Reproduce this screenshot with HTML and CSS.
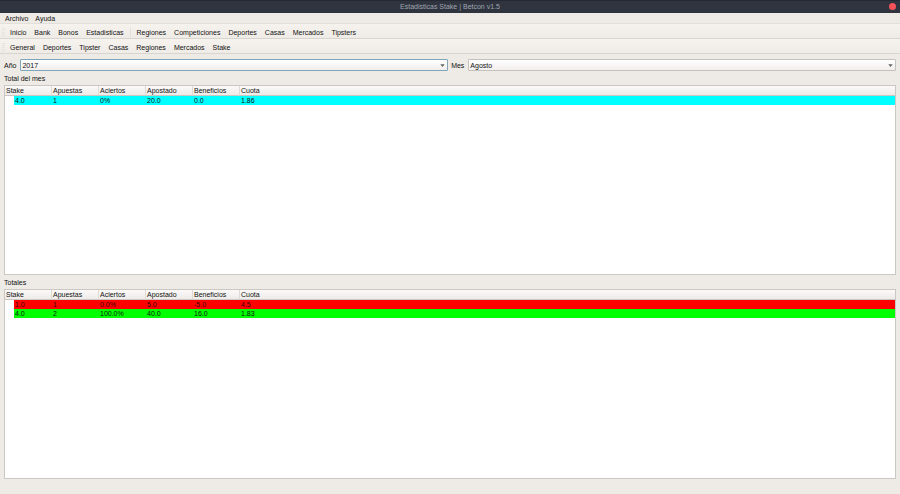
FILE: index.html
```html
<!DOCTYPE html>
<html lang="es">
<head>
<meta charset="utf-8">
<title>Estadisticas Stake | Betcon v1.5</title>
<link rel="stylesheet" href="styles.css">
</head>
<body>
<header class="titlebar">
  <h1 class="title">Estadisticas Stake | Betcon v1.5</h1>
  <button class="close" type="button" aria-label="Cerrar"></button>
</header>
<nav class="menubar">
  <button type="button">Archivo</button>
  <button type="button">Ayuda</button>
</nav>
<nav class="toolbar">
  <span class="grip"></span>
  <button type="button">Inicio</button>
  <button type="button">Bank</button>
  <button type="button">Bonos</button>
  <button type="button">Estadisticas</button>
  <span class="separator"></span>
  <button type="button">Regiones</button>
  <button type="button">Competiciones</button>
  <button type="button">Deportes</button>
  <button type="button">Casas</button>
  <button type="button">Mercados</button>
  <button type="button">Tipsters</button>
</nav>
<nav class="toolbar">
  <span class="grip"></span>
  <button type="button">General</button>
  <button type="button">Deportes</button>
  <button type="button">Tipster</button>
  <button type="button">Casas</button>
  <button type="button">Regiones</button>
  <button type="button">Mercados</button>
  <button type="button">Stake</button>
</nav>
<main class="content">
  <form class="filters">
    <label for="year">Año</label>
    <div class="combo">
      <select id="year" class="active"><option>2017</option></select>
      <svg class="arrow" viewBox="0 0 5 3" aria-hidden="true"><path d="M0.3 0.3H4.7L2.5 2.9Z"/></svg>
    </div>
    <label for="month">Mes</label>
    <div class="combo">
      <select id="month"><option>Agosto</option></select>
      <svg class="arrow" viewBox="0 0 5 3" aria-hidden="true"><path d="M0.3 0.3H4.7L2.5 2.9Z"/></svg>
    </div>
  </form>
  <h2 class="caption" id="month-total">Total del mes</h2>
  <div class="view">
    <table aria-labelledby="month-total">
      <thead>
        <tr><th>Stake</th><th>Apuestas</th><th>Aciertos</th><th>Apostado</th><th>Beneficios</th><th>Cuota</th></tr>
      </thead>
      <tbody>
        <tr class="neutral"><td>4.0</td><td>1</td><td>0%</td><td>20.0</td><td>0.0</td><td>1.86</td></tr>
      </tbody>
    </table>
  </div>
  <h2 class="caption" id="totals">Totales</h2>
  <div class="view">
    <table aria-labelledby="totals">
      <thead>
        <tr><th>Stake</th><th>Apuestas</th><th>Aciertos</th><th>Apostado</th><th>Beneficios</th><th>Cuota</th></tr>
      </thead>
      <tbody>
        <tr class="loss"><td>1.0</td><td>1</td><td>0.0%</td><td>5.0</td><td>-5.0</td><td>4.5</td></tr>
        <tr class="win"><td>4.0</td><td>2</td><td>100.0%</td><td>40.0</td><td>16.0</td><td>1.83</td></tr>
      </tbody>
    </table>
  </div>
</main>
</body>
</html>
```
FILE: styles.css
```css
* {
  box-sizing: border-box;
}

body {
  display: flex;
  flex-direction: column;
  min-height: 100vh;
  margin: 0;
  background: #eeeae6;
  color: #111111;
  font: 7px/9px "Liberation Sans", Arial, sans-serif;
}

button,
select {
  margin: 0;
  border: 0;
  background: none;
  color: inherit;
  font: inherit;
}

.titlebar {
  display: grid;
  grid-template-columns: 1fr auto 1fr;
  align-items: center;
  height: 13px;
  padding: 0 4px 1px;
  border-top: 1px solid #232833;
  background: #2f343f;
}

.title {
  grid-column: 2;
  margin: 0;
  color: #a0a6b1;
  font: inherit;
}

.close {
  justify-self: end;
  width: 7px;
  height: 7px;
  padding: 0;
  border-radius: 50%;
  background: #f7525a;
}

.menubar {
  display: flex;
  align-items: center;
  height: 11px;
  padding: 0 1px;
  border-bottom: 1px solid #e2deda;
}

.menubar button {
  padding: 0 3px 0 4px;
}

.toolbar {
  display: flex;
  align-items: center;
  height: 15px;
  padding: 2px 2px 0;
  border-bottom: 1px solid #d8d4d0;
  background: linear-gradient(#f6f3ef, #efebe6);
}

.toolbar button {
  padding: 0 4px;
}

.grip {
  width: 3px;
  height: 9px;
  margin-right: 1px;
  background: repeating-linear-gradient(#e6e2dd 0 1px, transparent 1px 2px);
}

.separator {
  width: 1px;
  height: 9px;
  margin: 0 2px;
  background: #e2deda;
}

.content {
  display: flex;
  flex: 1;
  flex-direction: column;
  padding: 5px 4px 15px;
}

.filters {
  display: flex;
  align-items: center;
  gap: 3px;
  margin: 0;
}

.filters label {
  padding-right: 1px;
}

.combo {
  position: relative;
  flex: 1;
}

.combo select {
  display: block;
  width: 100%;
  height: 12px;
  padding: 0 1px;
  border: 1px solid #c5c1bd;
  border-radius: 1px;
  background: linear-gradient(#ffffff, #f1efed);
  appearance: none;
}

.combo select.active {
  border-color: #7fa6b8;
}

.arrow {
  position: absolute;
  top: 5px;
  right: 3px;
  width: 5px;
  height: 3px;
  fill: #666666;
  pointer-events: none;
}

.caption {
  margin: 0;
  padding: 3px 0 2px;
  font: inherit;
}

.view {
  flex: 1 1 0px;
  border: 1px solid #cbc7c3;
  background: #ffffff;
}

table {
  width: 100%;
  border-spacing: 0;
  table-layout: fixed;
}

th,
td {
  padding: 0 1px;
  font-weight: normal;
  text-align: left;
}

th {
  width: 47px;
  height: 10px;
  border-right: 1px solid #dedad6;
  border-bottom: 1px solid #cbc7c3;
  background: linear-gradient(#fbfaf9, #eeebe8);
}

th:last-child {
  width: auto;
  border-right: 0;
}

td {
  height: 9px;
}

td:first-child {
  border-left: 9px solid #ffffff;
}

.neutral {
  background: #00ffff;
}

.loss {
  background: #ff0000;
  color: #400000;
}

.win {
  background: #00ff00;
}
```
